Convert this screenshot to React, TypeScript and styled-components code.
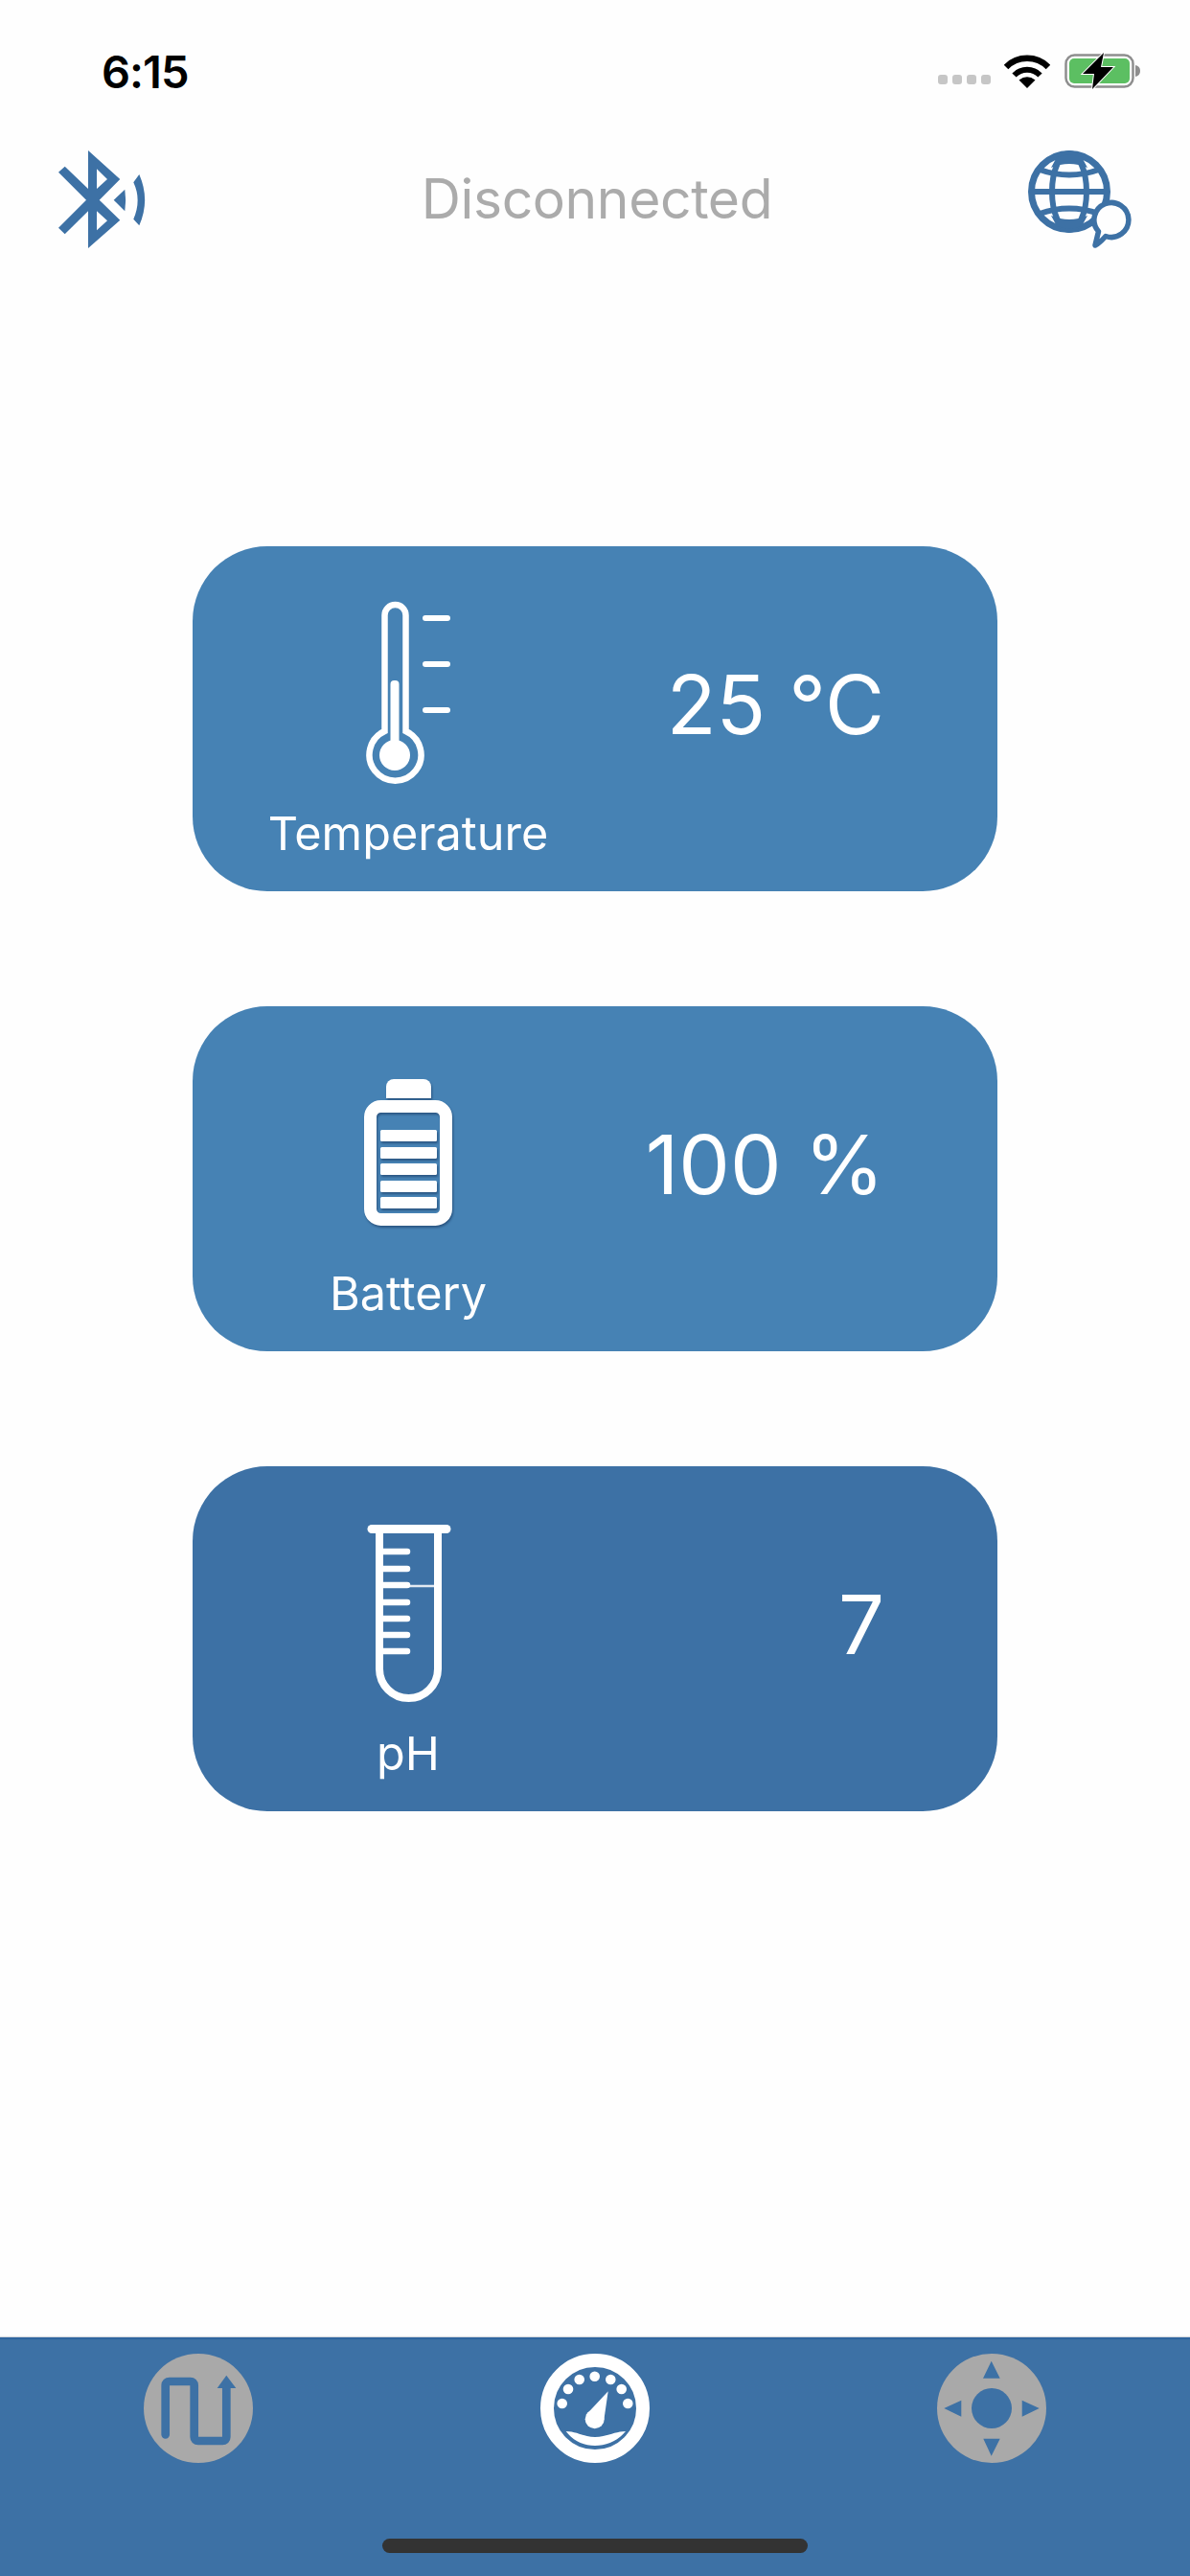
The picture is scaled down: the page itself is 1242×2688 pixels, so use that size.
import React from "react";
import styled, { createGlobalStyle } from "styled-components";

const GlobalStyle = createGlobalStyle`
  html, body {
    margin: 0;
    padding: 0;
    background: #fefefe;
  }
  * {
    box-sizing: border-box;
  }
`;

const BAR_BLUE = "#3d71a5";

const Page = styled.div`
  width: 1242px;
  height: 2688px;
  display: flex;
  flex-direction: column;
  background: #fefefe;
  font-family: Inter, "Liberation Sans", sans-serif;
`;

const StatusBar = styled.div`
  height: 157px;
  padding: 50px 51px 0 106px;
  display: flex;
  justify-content: space-between;
  align-items: flex-start;
`;

const Clock = styled.span`
  font-size: 47px;
  font-weight: 600;
  line-height: 50px;
  color: #000;
  letter-spacing: -1px;
`;

const StatusIcons = styled.div`
  display: flex;
  align-items: flex-end;
  padding-top: 5px;
`;

const SignalDots = styled.div`
  display: flex;
  gap: 5px;
  margin: 0 14px 5px 0;
`;

const SignalDot = styled.i`
  width: 10px;
  height: 10px;
  border-radius: 3px;
  background: #c6c6c6;
`;

const WifiIcon = styled.svg`
  width: 48px;
  height: 37px;
  margin-right: 15px;
`;

const BatteryIcon = styled.svg`
  width: 80px;
  height: 38px;
`;

const Header = styled.header`
  height: 102px;
  padding: 0 59px 0 61px;
  display: flex;
  justify-content: space-between;
  align-items: center;
`;

const HeaderIcon = styled.svg`
  width: 110px;
  height: 102px;
`;

const Title = styled.h1`
  margin: 0 0 2px 2px;
  font-size: 57px;
  font-weight: 400;
  color: #ababab;
  letter-spacing: -0.4px;
`;

const Cards = styled.main`
  flex: 1;
  padding-top: 311px;
  display: flex;
  flex-direction: column;
  align-items: center;
  gap: 120px;
`;

const Card = styled.section<{ $dark?: boolean }>`
  width: 840px;
  height: 360px;
  border-radius: 78px;
  background: ${(p) => (p.$dark ? BAR_BLUE : "#4682b4")};
  display: flex;
  justify-content: space-between;
  color: #fff;
`;

const Reading = styled.div`
  width: 450px;
  padding-top: 52px;
  display: flex;
  flex-direction: column;
  align-items: center;
`;

const ReadingIcon = styled.svg<{ $shadow?: boolean }>`
  width: 200px;
  height: 200px;
  ${(p) => p.$shadow && "filter: drop-shadow(1px 2px 1px rgba(20, 50, 90, 0.55));"}
`;

const Label = styled.span`
  margin-top: 18px;
  font-size: 48.6px;
  line-height: 60px;
`;

const Value = styled.div`
  padding: 0 118px 28px 0;
  align-self: center;
  font-size: 85px;
  line-height: 100px;
`;

const TabBar = styled.nav`
  height: 249px;
  background: ${BAR_BLUE};
  border-top: 2px solid #2f659f;
  box-shadow: 0 -1px 1px #d5d9de;
  display: flex;
  flex-direction: column;
`;

const Tabs = styled.div`
  padding-top: 15px;
  display: flex;
`;

const Tab = styled.div`
  flex: 1;
  display: flex;
  justify-content: center;
`;

const TabIcon = styled.svg`
  width: 114px;
  height: 114px;
`;

const HomeIndicator = styled.div`
  width: 444px;
  height: 15px;
  margin: 79px auto 0;
  border-radius: 8px;
  background: #333;
`;

const ICON_BLUE = "#3d71a5";

const readings = [
  { name: "Temperature", value: "25 °C" },
  { name: "Battery", value: "100 %" },
  { name: "pH", value: "7" },
];

const Thermometer = () => (
  <ReadingIcon viewBox="0 0 200 200">
    <path
      d="M75.5 141V20a11 11 0 0 1 22 0V141a27 27 0 1 1-22 0Z"
      fill="none"
      stroke="#fff"
      strokeWidth="6.5"
    />
    <circle cx="86" cy="166" r="16" fill="#fff" />
    <rect x="81.5" y="88" width="9" height="78" rx="4" fill="#fff" />
    <path
      d="M118 23H141M118 71H141M118 119H141"
      stroke="#fff"
      strokeWidth="6"
      strokeLinecap="round"
    />
  </ReadingIcon>
);

const BatteryLevel = () => (
  <ReadingIcon viewBox="0 0 200 200" $shadow>
    <path d="M77 44V32a8 8 0 0 1 8-8h31a8 8 0 0 1 8 8V44Z" fill="#fff" />
    <rect x="60.5" y="52.5" width="79" height="118" rx="11" fill="none" stroke="#fff" strokeWidth="13" />
    {[77, 95, 112, 130, 147].map((y) => (
      <rect key={y} x="71" y={y} width="59" height="12" rx="1.5" fill="#fff" />
    ))}
  </ReadingIcon>
);

const TestTube = () => (
  <ReadingIcon viewBox="0 0 200 200">
    <path d="M62 13.5H140" stroke="#fff" strokeWidth="9" strokeLinecap="round" />
    <path
      d="M70 14V159.500a30.500 30.500 0 0 0 61 0V14"
      fill="none"
      stroke="#fff"
      strokeWidth="8"
    />
    <path
      d="M70 37H99M70 55H99M70 72H99M70 90H99M70 107H99M70 124H99M70 141H99"
      stroke="#fff"
      strokeWidth="6.500"
      strokeLinecap="round"
    />
    <path d="M99 73H131" stroke="#fff" strokeWidth="2.500" opacity="0.85" />
  </ReadingIcon>
);

const icons = [<Thermometer />, <BatteryLevel />, <TestTube />];

export default function App() {
  return (
    <Page>
      <GlobalStyle />
      <StatusBar>
        <Clock>6:15</Clock>
        <StatusIcons>
          <SignalDots>
            <SignalDot />
            <SignalDot />
            <SignalDot />
            <SignalDot />
          </SignalDots>
          <WifiIcon viewBox="0 0 48 37">
            <path d="M2 14A31 31 0 0 1 46 14" fill="none" stroke="#000" strokeWidth="6.500" />
            <path d="M10.500 22.500A19 19 0 0 1 37.500 22.500" fill="none" stroke="#000" strokeWidth="6" />
            <path d="M24 36L15.500 27.500Q24 21 32.500 27.500Z" fill="#000" />
          </WifiIcon>
          <BatteryIcon viewBox="0 0 80 38">
            <rect x="1.500" y="2.500" width="70" height="33" rx="9" fill="none" stroke="#8e8e8e" strokeWidth="2.500" />
            <rect x="5" y="6" width="63" height="26" rx="5" fill="#5cbf62" />
            <path d="M74 13Q79 14 79 19Q79 24 74 25Z" fill="#8e8e8e" />
            <path
              d="M41 0L19 22H31L29 38L51 15H38Z"
              fill="#000"
              stroke="#fff"
              strokeWidth="2"
              paintOrder="stroke"
            />
          </BatteryIcon>
        </StatusIcons>
      </StatusBar>

      <Header>
        <HeaderIcon viewBox="0 0 110 102">
          <path
            fillRule="evenodd"
            fill={ICON_BLUE}
            d="M31 0L64.300 30L42.700 51.700L64.300 72.700L31 102V63.300L6.700 87.300L0 80.700L29 51.700L0 22.700L6.700 16.700L31 40ZM40 19.300L51 30L40 40ZM40 63.300L51 73.300L40 83.300Z"
          />
          <path fill={ICON_BLUE} d="M57.700 51.700L69.300 40.700Q71 51.700 69.300 63.300Z" />
          <path fill={ICON_BLUE} d="M78.300 33.300L84.300 25Q96 51.700 84.300 78.300L78.300 71.700Q87 51.700 78.300 33.300Z" />
        </HeaderIcon>
        <Title>Disconnected</Title>
        <HeaderIcon viewBox="0 0 110 102">
          <g fill="none" stroke={ICON_BLUE}>
            <circle cx="43" cy="43" r="39.500" strokeWidth="7" />
            <ellipse cx="43" cy="43" rx="18" ry="40" strokeWidth="6" />
            <path d="M4 43H82" strokeWidth="6" />
            <path d="M12 20Q43 31 74 20M12 66Q43 55 74 66" strokeWidth="6" />
            <path d="M30 7Q43 2 56 7L62 18Q43 10 24 18ZM30 79Q43 84 56 79L62 68Q43 76 24 68Z" strokeWidth="0" fill={ICON_BLUE} />
          </g>
          <path
            d="M70 99L73.500 84.500A18 18 0 1 1 81 89.500C77 94 74 97 70 99Z"
            fill="#fefefe"
            stroke={ICON_BLUE}
            strokeWidth="5.500"
            strokeLinejoin="round"
          />
        </HeaderIcon>
      </Header>

      <Cards>
        {readings.map((r, i) => (
          <Card key={r.name} $dark={i === 2}>
            <Reading>
              {icons[i]}
              <Label>{r.name}</Label>
            </Reading>
            <Value>{r.value}</Value>
          </Card>
        ))}
      </Cards>

      <TabBar>
        <Tabs>
          <Tab>
            <TabIcon viewBox="0 0 114 114">
              <circle cx="57" cy="57" r="57" fill="#a9a9a9" />
              <path
                d="M22.700 84.300V33a4 4 0 0 1 4-4H48.700a4 4 0 0 1 4 4V87a4 4 0 0 0 4 4H82.300a4 4 0 0 0 4-4V34"
                fill="none"
                stroke={BAR_BLUE}
                strokeWidth="8.700"
                strokeLinecap="round"
              />
              <path d="M86.300 22.700L96.300 36H76.700Z" fill={BAR_BLUE} />
            </TabIcon>
          </Tab>
          <Tab>
            <TabIcon viewBox="0 0 114 114">
              <circle cx="57" cy="57" r="50" fill="none" stroke="#fff" strokeWidth="14" />
              {[
                [22.7, 52],
                [29, 37],
                [40.7, 27],
                [56.7, 23.7],
                [73.3, 27],
                [84.7, 37],
                [91.3, 52],
              ].map(([x, y]) => (
                <circle key={x} cx={x} cy={y} r="5.300" fill="#fff" />
              ))}
              <circle cx="56.700" cy="68.300" r="10" fill="#fff" />
              <path d="M70.700 39.300L47.500 64L66.500 68Z" fill="#fff" />
              <path
                d="M26.700 81C38 81 45 87 57 87C69 87 78 81 89 81C81 91 69 96 57 96C45 96 34 91 26.700 81Z"
                fill="#fff"
              />
            </TabIcon>
          </Tab>
          <Tab>
            <TabIcon viewBox="0 0 114 114">
              <circle cx="57" cy="57" r="57" fill="#a9a9a9" />
              <circle cx="57" cy="57" r="21" fill={BAR_BLUE} />
              <path
                d="M56.700 7.700L65.700 25.700H48ZM56.700 106.700L48.300 88.700H65.700ZM7.300 57L25.300 48.700V65.700ZM106.700 57L88.700 48.700V65.700Z"
                fill={BAR_BLUE}
              />
            </TabIcon>
          </Tab>
        </Tabs>
        <HomeIndicator />
      </TabBar>
    </Page>
  );
}
